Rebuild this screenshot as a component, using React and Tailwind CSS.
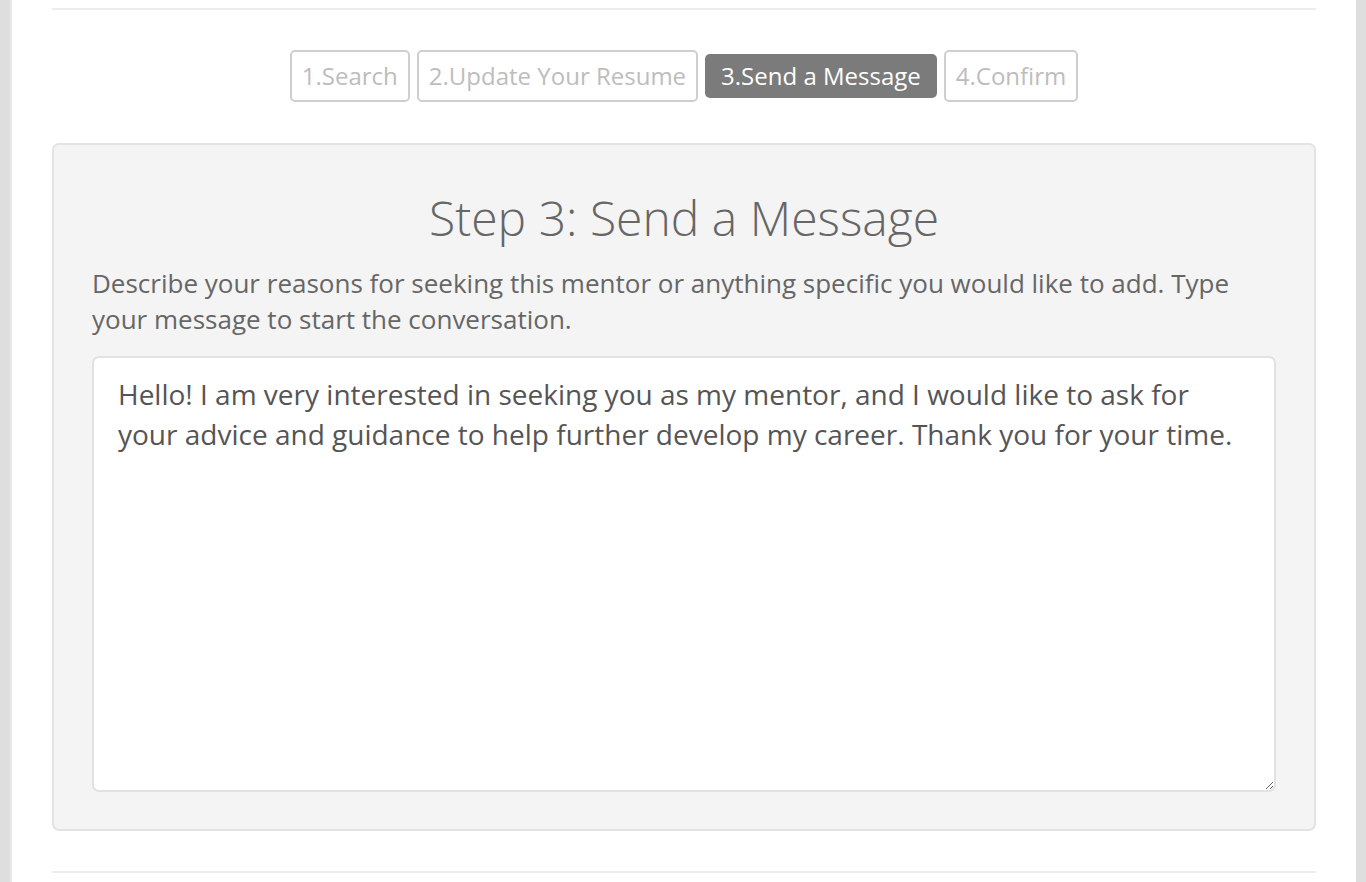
import React from 'react';

const steps = [
  { label: '1.Search', active: false },
  { label: '2.Update Your Resume', active: false },
  { label: '3.Send a Message', active: true },
  { label: '4.Confirm', active: false },
];

const StepButton = ({ label, active }) => {
  if (active) {
    return (
      <div className="h-[44px] px-[16px] flex items-center rounded-[5px] bg-[#7b7b7b] text-white text-[24px]">
        {label}
      </div>
    );
  }
  return (
    <div className="h-[52px] px-[10px] flex items-center rounded-[5px] border-2 border-[#cfcfcf] bg-white text-[#bdbdbd] text-[24px]">
      {label}
    </div>
  );
};

const message =
  'Hello! I am very interested in seeking you as my mentor, and I would like to ask for your advice and guidance to help further develop my career. Thank you for your time.';

export default function App() {
  return (
    <div
      className="flex min-h-[882px] w-full bg-white"
      style={{ fontFamily: '"Open Sans", "Noto Sans", sans-serif' }}
    >
      <div className="w-[10px] shrink-0 bg-[#dedede]" />
      <div className="w-[2px] shrink-0 bg-[#e9e9e9]" />
      <main className="flex-1 px-[40px] pt-[8px]">
        <div className="h-[2px] bg-[#ececec]" />

        <div className="mt-[40px] flex items-center justify-center gap-[7px]">
          {steps.map((s) => (
            <StepButton key={s.label} {...s} />
          ))}
        </div>

        <section className="mt-[41px] rounded-[7px] border-2 border-[#e3e3e3] bg-[#f4f4f4] px-[38px] pt-[45px] pb-[37px]">
          <h1 className="text-center text-[48px] leading-[56px] font-light text-[#666]">
            Step 3: Send a Message
          </h1>
          <p className="mt-[19px] text-[26px] leading-[36px] text-[#666]">
            Describe your reasons for seeking this mentor or anything specific you would like to add. Type your message to start the conversation.
          </p>
          <textarea
            readOnly
            value={message}
            className="mt-[19px] block h-[436px] w-full rounded-[7px] border-2 border-[#e2e2e2] bg-white px-[24px] pt-[16px] text-[28px] leading-[40px] text-[#555] outline-none"
          />
        </section>

        <div className="mt-[40px] h-[2px] bg-[#ececec]" />
      </main>
      <div className="w-[10px] shrink-0 bg-[#dedede]" />
    </div>
  );
}
